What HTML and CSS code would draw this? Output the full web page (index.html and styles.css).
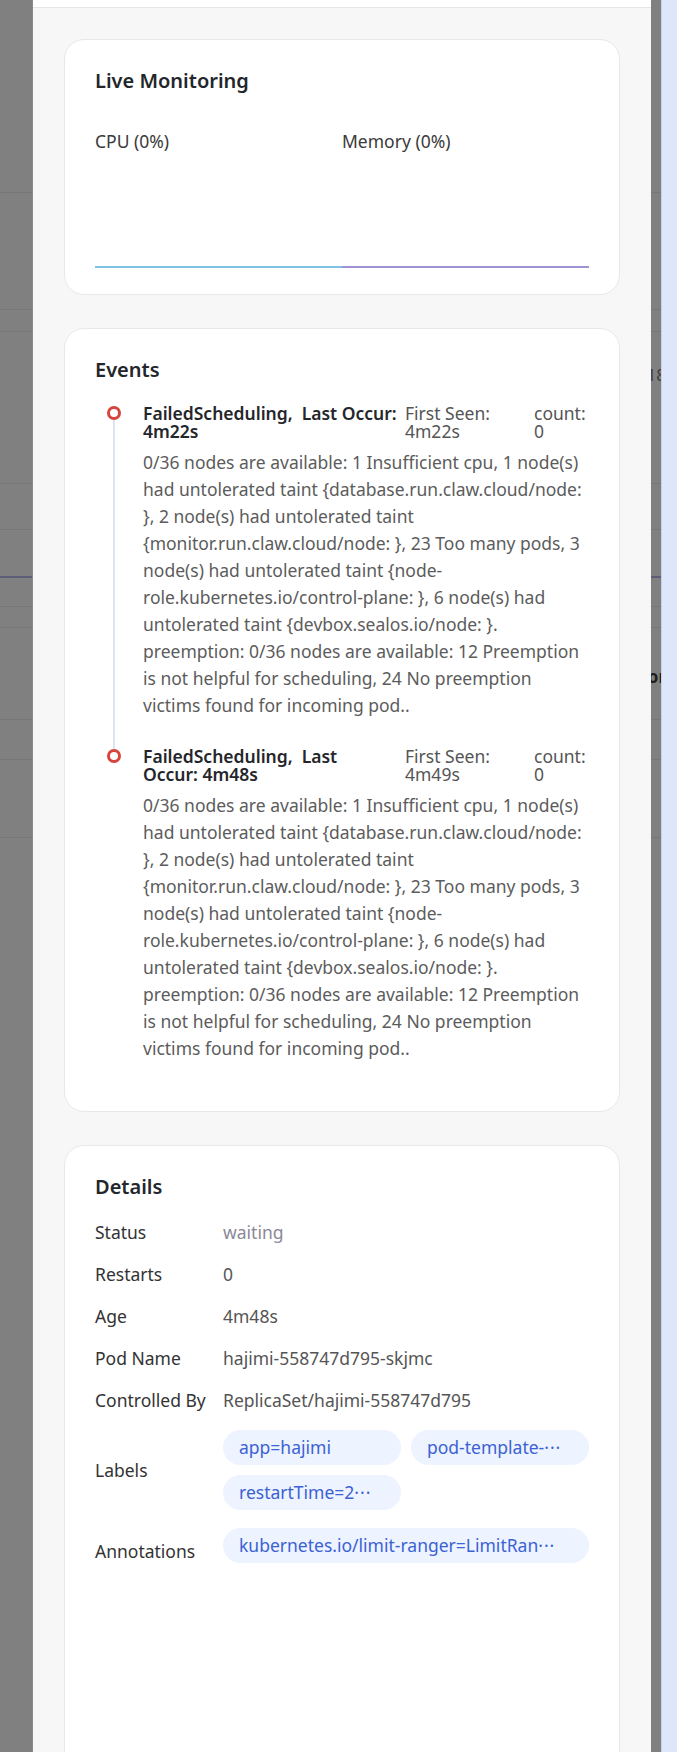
FILE: index.html
```html
<!DOCTYPE html>
<html lang="en">
<head>
<meta charset="utf-8">
<title>Pod detail</title>
<link rel="stylesheet" href="styles.css">
</head>
<body>
<div class="screen">
  <div class="backdrop">
    <div class="bg-row h193"></div>
    <div class="bg-row h117"></div>
    <div class="bg-row h22"></div>
    <div class="bg-row h152"><span class="bg-text">18</span></div>
    <div class="bg-row h46"></div>
    <div class="bg-row h48 accent"></div>
    <div class="bg-row h29"></div>
    <div class="bg-row h21"></div>
    <div class="bg-row h92"><span class="bg-text bold">or</span></div>
    <div class="bg-row h40"></div>
    <div class="bg-row h78"></div>
    <div class="bg-row h904"></div>
  </div>
  <div class="edge"></div>
</div>

<aside class="drawer">
  <div class="drawer-top"></div>
  <div class="drawer-body">

    <section class="card monitor-card">
      <h2 class="card-title">Live Monitoring</h2>
      <div class="monitor">
        <div class="metric">
          <div class="metric-label">CPU (0%)</div>
          <div class="chart cpu"></div>
        </div>
        <div class="metric">
          <div class="metric-label">Memory (0%)</div>
          <div class="chart mem"></div>
        </div>
      </div>
    </section>

    <section class="card events-card">
      <h2 class="card-title">Events</h2>
      <div class="timeline">
        <div class="event">
          <span class="dot"></span>
          <div class="ev-head">
            <div class="ev-name">FailedScheduling, &nbsp;Last Occur: 4m22s</div>
            <div class="ev-seen">First Seen: 4m22s</div>
            <div class="ev-count">count: 0</div>
          </div>
          <p class="ev-msg">0/36 nodes are available: 1 Insufficient cpu, 1 node(s) had untolerated taint {database.run.claw.cloud/node: }, 2 node(s) had untolerated taint {monitor.run.claw.cloud/node: }, 23 Too many pods, 3 node(s) had untolerated taint {node-role.kubernetes.io/control-plane: }, 6 node(s) had untolerated taint {devbox.sealos.io/node: }. preemption: 0/36 nodes are available: 12 Preemption is not helpful for scheduling, 24 No preemption victims found for incoming pod..</p>
        </div>
        <div class="event">
          <span class="dot"></span>
          <div class="ev-head">
            <div class="ev-name">FailedScheduling, &nbsp;Last<br>Occur: 4m48s</div>
            <div class="ev-seen">First Seen: 4m49s</div>
            <div class="ev-count">count: 0</div>
          </div>
          <p class="ev-msg">0/36 nodes are available: 1 Insufficient cpu, 1 node(s) had untolerated taint {database.run.claw.cloud/node: }, 2 node(s) had untolerated taint {monitor.run.claw.cloud/node: }, 23 Too many pods, 3 node(s) had untolerated taint {node-role.kubernetes.io/control-plane: }, 6 node(s) had untolerated taint {devbox.sealos.io/node: }. preemption: 0/36 nodes are available: 12 Preemption is not helpful for scheduling, 24 No preemption victims found for incoming pod..</p>
        </div>
      </div>
    </section>

    <section class="card details-card">
      <h2 class="card-title">Details</h2>
      <div class="details">
        <div class="row"><div class="key">Status</div><div class="val muted">waiting</div></div>
        <div class="row"><div class="key">Restarts</div><div class="val">0</div></div>
        <div class="row"><div class="key">Age</div><div class="val">4m48s</div></div>
        <div class="row"><div class="key">Pod Name</div><div class="val">hajimi-558747d795-skjmc</div></div>
        <div class="row"><div class="key">Controlled By</div><div class="val">ReplicaSet/hajimi-558747d795</div></div>
        <div class="row">
          <div class="key">Labels</div>
          <div class="val chips">
            <span class="chip">app=hajimi</span>
            <span class="chip">pod-template-<span class="more">···</span></span>
            <span class="chip">restartTime=2<span class="more">···</span></span>
          </div>
        </div>
        <div class="row row-end">
          <div class="key">Annotations</div>
          <div class="val chips single">
            <span class="chip">kubernetes.io/limit-ranger=LimitRan<span class="more">···</span></span>
          </div>
        </div>
      </div>
    </section>

  </div>
</aside>
</body>
</html>
```

FILE: styles.css
```css
* { box-sizing: border-box; }

html, body {
  margin: 0;
  padding: 0;
}

body {
  width: 677px;
  height: 1752px;
  overflow: hidden;
  position: relative;
  font-family: "Noto Sans", "Open Sans", "Noto Sans CJK SC", sans-serif;
  background: #dee6fb;
}

/* underlying page, dimmed by the modal overlay */
.screen {
  display: flex;
  height: 1752px;
}

.backdrop {
  width: 661px;
  background: #808080;
  display: flex;
  flex-direction: column;
}

.bg-row {
  border-bottom: 1px solid #777779;
  display: flex;
  justify-content: flex-end;
  align-items: center;
  overflow: hidden;
}

.bg-row.accent { border-bottom: 2px solid #5d5d77; }

.h193 { height: 193px; }
.h117 { height: 117px; }
.h22 { height: 22px; }
.h152 { height: 152px; align-items: flex-start; padding-top: 34px; }
.h46 { height: 46px; }
.h48 { height: 48px; }
.h29 { height: 29px; }
.h21 { height: 21px; }
.h92 { height: 92px; align-items: flex-start; padding-top: 40px; }
.h40 { height: 40px; }
.h78 { height: 78px; }
.h904 { height: 904px; border-bottom: none; }

.bg-text {
  font-size: 17px;
  color: #3e3e3e;
  margin-right: -5px;
  line-height: 18px;
}

.bg-text.bold { font-weight: 700; color: #1e1e1e; }

.edge {
  width: 16px;
  background: #dee6fb;
  border-left: 1px solid #c9d1e6;
}

/* drawer */
.drawer {
  position: absolute;
  top: 0;
  left: 32px;
  width: 619px;
  height: 1752px;
  overflow: hidden;
  background: #f7f7f7;
  border-left: 1px solid #8a8a8a;
}

.drawer-top {
  height: 8px;
  background: #ffffff;
  border-bottom: 1px solid #e6e6e6;
}

.drawer-body {
  padding: 31px 31px 0 31px;
  display: flex;
  flex-direction: column;
  gap: 33px;
}

.card {
  background: #ffffff;
  border: 1px solid #e8e8e8;
  border-radius: 20px;
  padding: 28px 30px 28px 30px;
}

.card-title {
  margin: 0;
  font-size: 20px;
  line-height: 26px;
  font-weight: 600;
  color: #23262b;
}

/* Live Monitoring */
.monitor-card { padding-bottom: 26px; }

.monitor {
  display: grid;
  grid-template-columns: 1fr 1fr;
  margin-top: 35px;
}

.metric-label {
  font-size: 17.5px;
  line-height: 24px;
  color: #3a3a3a;
}

.chart {
  height: 115px;
  border-bottom: 2px solid #7cc4e2;
}

.chart.mem { border-bottom-color: #9f91d5; }

/* Events */
.events-card { padding-bottom: 49px; }

.timeline {
  margin-top: 21px;
  display: flex;
  flex-direction: column;
  gap: 28px;
}

.event {
  position: relative;
  padding-left: 48px;
}

.dot {
  position: absolute;
  left: 12px;
  top: 2px;
  width: 14px;
  height: 14px;
  border: 3px solid #d5443d;
  border-radius: 50%;
  background: #ffffff;
  z-index: 1;
}

.event:not(:last-child)::before {
  content: "";
  position: absolute;
  left: 18px;
  top: 12px;
  bottom: -30px;
  width: 2px;
  background: #dde5ee;
}

.ev-head {
  display: flex;
  font-size: 17.5px;
  line-height: 18px;
}

.ev-name {
  flex: 0 0 262px;
  width: 262px;
  font-weight: 600;
  color: #24262b;
}

.ev-seen {
  flex: 0 0 129px;
  width: 129px;
  padding-right: 10px;
  color: #555555;
}

.ev-count {
  flex: 1 1 auto;
  width: 0;
  color: #555555;
}

.ev-msg {
  margin: 9px 0 0 0;
  font-size: 17.5px;
  line-height: 27px;
  color: #5c5c5c;
}

/* Details */
.details-card { min-height: 640px; }

.details {
  margin-top: 20px;
  display: flex;
  flex-direction: column;
  gap: 18px;
}

.row {
  display: flex;
  align-items: center;
  font-size: 17.5px;
  line-height: 24px;
}

.row.row-end { align-items: flex-end; }

.key {
  flex: 0 0 128px;
  color: #333333;
}

.val {
  flex: 1 1 auto;
  color: #555555;
}

.val.muted { color: #8a8a97; }

.chips {
  display: grid;
  grid-template-columns: 1fr 1fr;
  column-gap: 10px;
  row-gap: 10px;
}

.chips.single { grid-template-columns: 1fr; }

.chip {
  display: block;
  height: 35px;
  line-height: 35px;
  padding: 0 16px;
  border-radius: 18px;
  background: #edf3ff;
  color: #3b62d4;
  white-space: nowrap;
  overflow: hidden;
}

.more {
  letter-spacing: 1px;
}
```
